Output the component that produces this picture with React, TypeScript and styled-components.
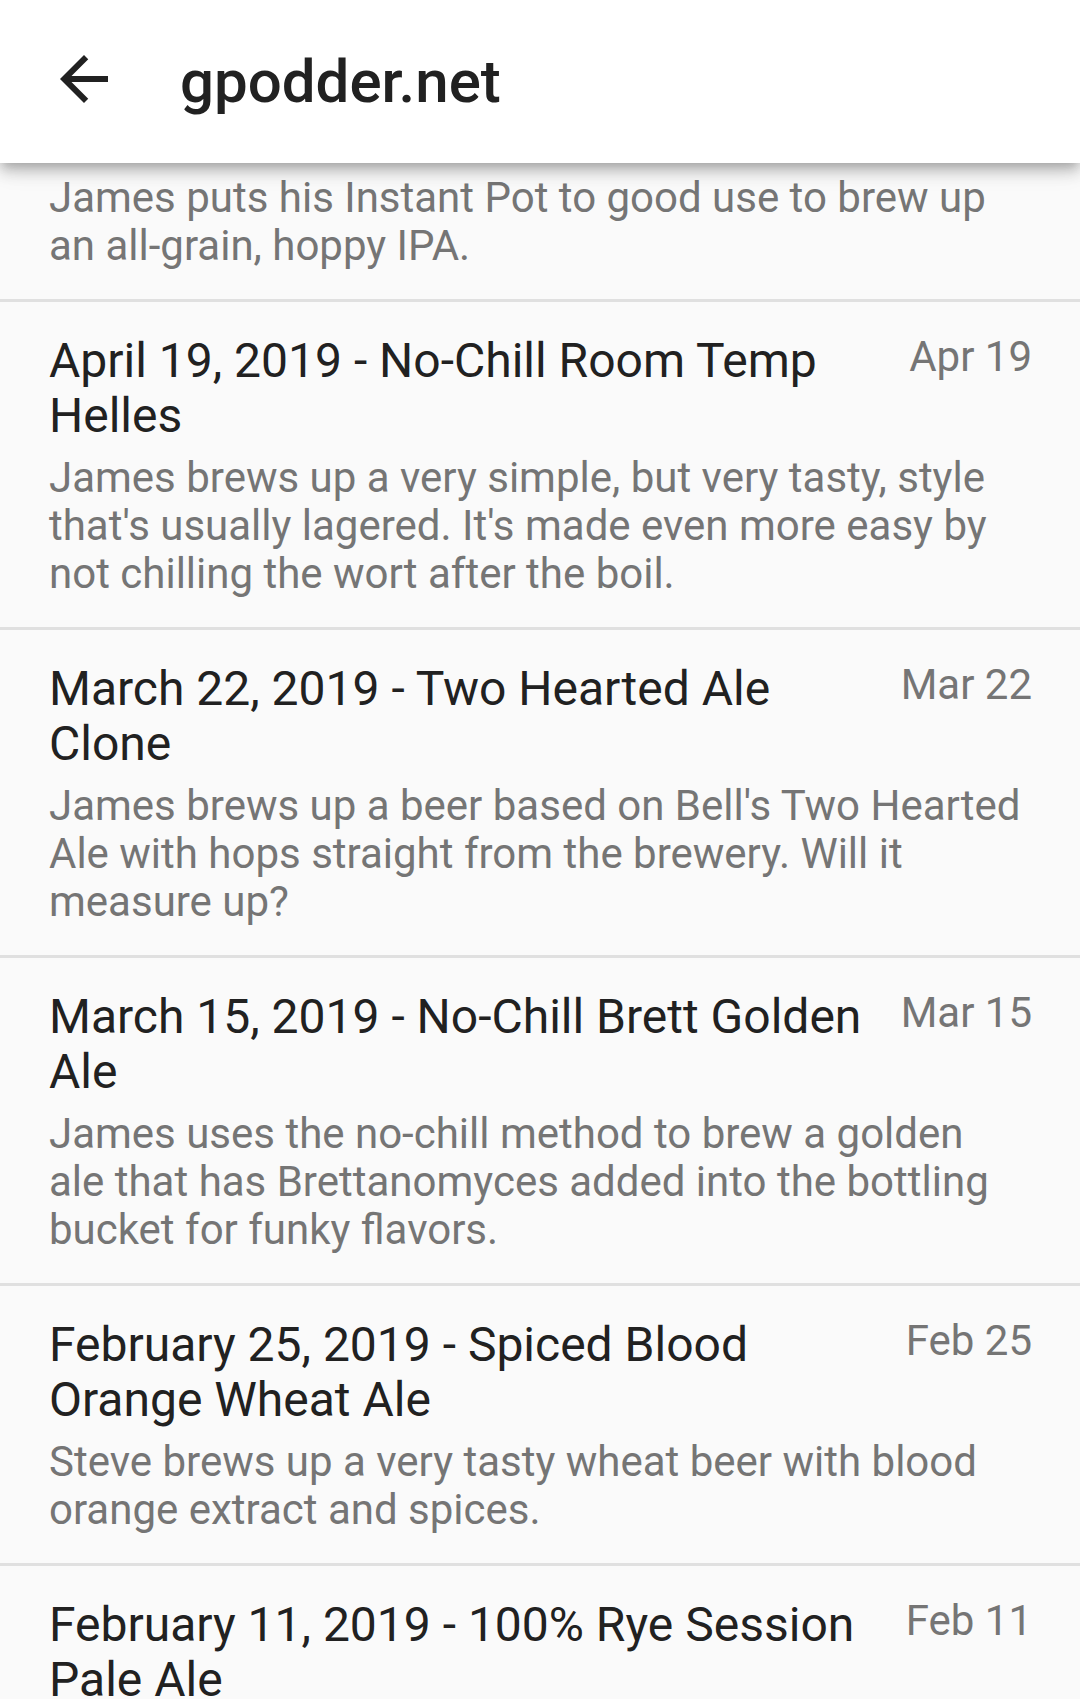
import React from "react";
import styled, { createGlobalStyle } from "styled-components";

const GlobalStyle = createGlobalStyle`
  html, body {
    margin: 0;
    padding: 0;
    background: #fafafa;
  }
  body {
    font-family: Roboto, "Noto Sans", "Liberation Sans", sans-serif;
    -webkit-font-smoothing: antialiased;
  }
  * { box-sizing: border-box; }
`;

const Screen = styled.div`
  width: 1080px;
  height: 1699px;
  overflow: hidden;
  background: #fafafa;
  display: flex;
  flex-direction: column;
`;

const AppBar = styled.header`
  position: relative;
  z-index: 2;
  flex: 0 0 163px;
  height: 163px;
  background: #ffffff;
  display: flex;
  align-items: center;
  padding-left: 48px;
  box-shadow: 0 5px 10px -3px rgba(0, 0, 0, 0.2), 0 10px 13px 0 rgba(0, 0, 0, 0.14),
    0 3px 26px 0 rgba(0, 0, 0, 0.12);
`;

const BackButton = styled.button`
  width: 72px;
  height: 72px;
  padding: 0;
  margin: 0 60px 0 0;
  border: none;
  background: transparent;
  display: flex;
  align-items: center;
  justify-content: center;
  transform: translateY(-3px);
  color: #212121;
`;

const AppTitle = styled.h1`
  margin: 0;
  font-family: Roboto, sans-serif;
  font-weight: 500;
  font-size: 60px;
  line-height: 1;
  color: #212121;
`;

const Feed = styled.ul<{ $scroll: number }>`
  list-style: none;
  margin: ${(p) => -p.$scroll}px 0 0;
  padding: 0;
  position: relative;
  z-index: 1;
`;

const Episode = styled.li`
  padding: 31px 48px 29px 49px;
  border-bottom: 3px solid #e0e0e0;
  display: flex;
  flex-direction: column;
  gap: 11px;
`;

const HeadRow = styled.div`
  display: flex;
  align-items: flex-start;
  gap: 24px;
`;

const EpisodeTitle = styled.div`
  flex: 1 1 auto;
  min-width: 0;
  font-size: 48px;
  line-height: 55px;
  font-weight: 400;
  color: #212121;
`;

const EpisodeDate = styled.div`
  flex: 0 0 auto;
  font-size: 42px;
  line-height: 48px;
  color: #757575;
  white-space: nowrap;
`;

const Description = styled.div`
  margin-right: 8px;
  font-size: 42px;
  line-height: 48px;
  color: #757575;
`;

type Item = { title: string; date: string; desc: string };

const items: Item[] = [
  {
    title: "April 26, 2019 - Instant Pot IPA",
    date: "Apr 26",
    desc: "James puts his Instant Pot to good use to brew up an all-grain, hoppy IPA.",
  },
  {
    title: "April 19, 2019 - No-Chill Room Temp Helles",
    date: "Apr 19",
    desc: "James brews up a very simple, but very tasty, style that's usually lagered. It's made even more easy by not chilling the wort after the boil.",
  },
  {
    title: "March 22, 2019 - Two Hearted Ale Clone",
    date: "Mar 22",
    desc: "James brews up a beer based on Bell's Two Hearted Ale with hops straight from the brewery. Will it measure up?",
  },
  {
    title: "March 15, 2019 - No-Chill Brett Golden Ale",
    date: "Mar 15",
    desc: "James uses the no-chill method to brew a golden ale that has Brettanomyces added into the bottling bucket for funky flavors.",
  },
  {
    title: "February 25, 2019 - Spiced Blood Orange Wheat Ale",
    date: "Feb 25",
    desc: "Steve brews up a very tasty wheat beer with blood orange extract and spices.",
  },
  {
    title: "February 11, 2019 - 100% Rye Session Pale Ale",
    date: "Feb 11",
    desc: "James brews a pale ale made with nothing but rye malt to see how it turns out.",
  },
];

const ArrowBack = () => (
  <svg width="72" height="72" viewBox="0 0 24 24" fill="currentColor" aria-hidden="true">
    <path d="M20 11H7.83l5.59-5.59L12 4l-8 8 8 8 1.41-1.41L7.83 13H20v-2z" />
  </svg>
);

export default function App() {
  return (
    <>
      <GlobalStyle />
      <Screen>
        <AppBar>
          <BackButton aria-label="Back">
            <ArrowBack />
          </BackButton>
          <AppTitle>gpodder.net</AppTitle>
        </AppBar>
        <Feed $scroll={86}>
          {items.map((it) => (
            <Episode key={it.title}>
              <HeadRow>
                <EpisodeTitle>{it.title}</EpisodeTitle>
                <EpisodeDate>{it.date}</EpisodeDate>
              </HeadRow>
              <Description>{it.desc}</Description>
            </Episode>
          ))}
        </Feed>
      </Screen>
    </>
  );
}
